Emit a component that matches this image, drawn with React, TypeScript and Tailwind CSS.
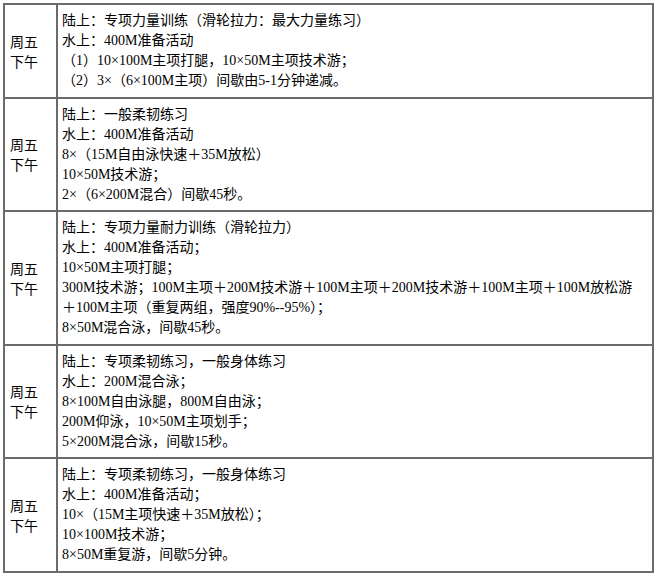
import React from "react";

const rows: string[][] = [
  [
    "陆上：专项力量训练（滑轮拉力：最大力量练习）",
    "水上：400M准备活动",
    "（1）10×100M主项打腿，10×50M主项技术游；",
    "（2）3×（6×100M主项）间歇由5-1分钟递减。",
  ],
  [
    "陆上：一般柔韧练习",
    "水上：400M准备活动",
    "8×（15M自由泳快速＋35M放松）",
    "10×50M技术游；",
    "2×（6×200M混合）间歇45秒。",
  ],
  [
    "陆上：专项力量耐力训练（滑轮拉力）",
    "水上：400M准备活动；",
    "10×50M主项打腿；",
    "300M技术游；100M主项＋200M技术游＋100M主项＋200M技术游＋100M主项＋100M放松游",
    "＋100M主项（重复两组，强度90%--95%）；",
    "8×50M混合泳，间歇45秒。",
  ],
  [
    "陆上：专项柔韧练习，一般身体练习",
    "水上：200M混合泳；",
    "8×100M自由泳腿，800M自由泳；",
    "200M仰泳，10×50M主项划手；",
    "5×200M混合泳，间歇15秒。",
  ],
  [
    "陆上：专项柔韧练习，一般身体练习",
    "水上：400M准备活动；",
    "10×（15M主项快速＋35M放松）；",
    "10×100M技术游；",
    "8×50M重复游，间歇5分钟。",
  ],
];

export default function App() {
  return (
    <div className="w-[656px] h-[576px] bg-white p-[3px] text-[14px] leading-[20px] text-black font-['Liberation_Serif','Noto_Sans_CJK_SC',serif]">
      {/* training schedule table */}
      <div className="w-[651px] border-2 border-[#6b6b6b]">
        {rows.map((lines, i) => (
          <div
            key={i}
            className={`grid grid-cols-[53px_1fr] ${i > 0 ? "border-t-2 border-[#6b6b6b]" : ""}`}
          >
            <div className="flex items-center border-r-2 border-[#6b6b6b] pl-[5px] font-['Noto_Sans_CJK_SC',sans-serif]">
              <span>
                周五
                <br />
                下午
              </span>
            </div>
            <div className="pl-[4px] pt-[6px] pb-[5.5px]">
              {lines.map((line, j) => (
                <div key={j} className="whitespace-nowrap">
                  {line}
                </div>
              ))}
            </div>
          </div>
        ))}
      </div>
    </div>
  );
}
